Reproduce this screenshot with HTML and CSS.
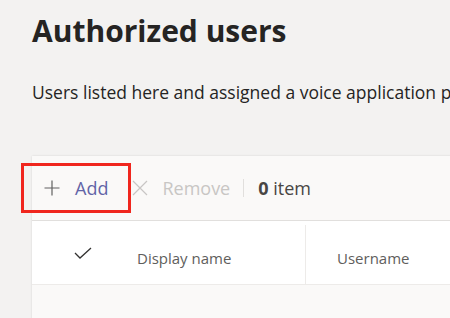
FILE: index.html
```html
<!DOCTYPE html>
<html lang="en">
<head>
  <meta charset="UTF-8">
  <meta name="viewport" content="width=device-width, initial-scale=1">
  <title>Authorized users</title>
  <link rel="stylesheet" href="styles.css">
</head>
<body>

  <div class="page">
    <h1 class="page-title">Authorized users</h1>
    <p class="page-desc">Users listed here and assigned a voice application policy can manage this app.</p>

    <div class="card">
      <div class="toolbar">
        <button class="tool-btn add-btn">
          <svg width="16" height="16" viewBox="0 0 16 16"><path d="M8 0.5v15M0.5 8h15" stroke="#616161" stroke-width="1.2" fill="none"/></svg>
          <span>Add</span>
        </button>
        <button class="tool-btn remove-btn" disabled>
          <svg width="16" height="16" viewBox="0 0 16 16"><path d="M1 1l14 14M15 1L1 15" stroke="#c8c6c4" stroke-width="1.2" fill="none"/></svg>
          <span>Remove</span>
        </button>
        <span class="divider"></span>
        <span class="count"><b>0</b> item</span>
      </div>

      <div class="table-head">
        <div class="cell check-cell">
          <svg width="18" height="12" viewBox="0 0 18 12"><path d="M1 6l5 5L17 1" stroke="#323130" stroke-width="1.3" fill="none"/></svg>
        </div>
        <div class="cell name-cell">Display name</div>
        <div class="cell user-cell">Username</div>
      </div>
      <div class="table-body"></div>
    </div>
  </div>

</body>
</html>
```

FILE: styles.css
```css
body {
  margin: 0;
  padding: 0;
  background: #f3f2f1;
  color: #252423;
  font-family: 'Open Sans', 'Noto Sans', sans-serif;
  overflow: hidden;
  height: 318px;
}

.page {
  padding-left: 32px;
  padding-top: 9px;
}

.page-title {
  margin: 0;
  font-size: 30px;
  font-weight: 700;
  line-height: 44px;
  color: #252423;
  white-space: nowrap;
}

.page-desc {
  margin: 27px 0 0;
  font-size: 17.5px;
  line-height: 24px;
  color: #252423;
  white-space: nowrap;
  overflow: hidden;
}

.card {
  margin-top: 52px;
  width: 600px;
  background: #faf9f8;
  box-shadow: 0 0 2px rgba(0, 0, 0, 0.12);
}

.toolbar {
  height: 64px;
  display: flex;
  align-items: center;
  border-bottom: 1px solid #e1dfdd;
}

.tool-btn {
  display: flex;
  align-items: center;
  gap: 15px;
  height: 44px;
  border: none;
  background: transparent;
  font-family: inherit;
  font-size: 18px;
  padding: 0;
  cursor: pointer;
}

.add-btn {
  margin-left: -8px;
  padding: 0 20px 0 20px;
  color: #6264a7;
  outline: 3px solid #f0261e;
}

.remove-btn {
  margin-left: 4px;
  gap: 14px;
  color: #c8c6c4;
  cursor: default;
}

.divider {
  width: 1px;
  height: 18px;
  background: #e1dfdd;
  margin: 0 14px 0 13px;
}

.count {
  font-size: 18px;
  color: #484644;
}

.table-head {
  display: flex;
  height: 63px;
  background: #fff;
  border-bottom: 1px solid #edebe9;
}

.cell {
  display: flex;
  align-items: center;
  font-size: 15px;
  color: #605e5c;
}

.check-cell {
  width: 105px;
  padding-left: 42px;
  box-sizing: border-box;
}

.name-cell {
  width: 168px;
  border-right: 1px solid #edebe9;
  margin-top: 4px;
  padding-top: 6px;
}

.user-cell {
  padding-left: 31px;
  padding-top: 10px;
}

.table-body {
  height: 40px;
}
```
